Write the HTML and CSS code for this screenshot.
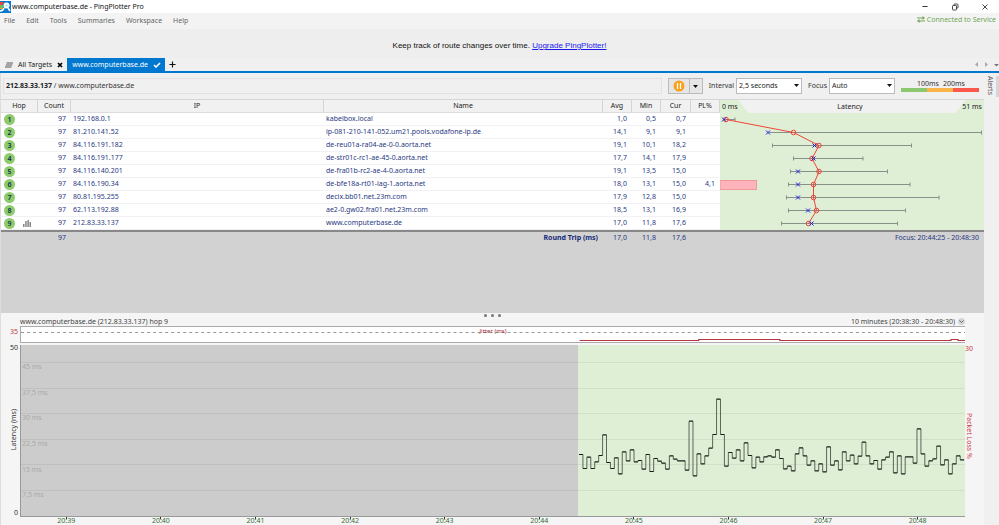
FILE: index.html
```html
<!DOCTYPE html>
<html lang="en">
<head>
<meta charset="utf-8">
<title>www.computerbase.de - PingPlotter Pro</title>
<link rel="stylesheet" href="styles.css">
</head>
<body>
<div class="app">
  <header class="titlebar">
    <svg class="logo" viewBox="0 0 11 12" aria-hidden="true">
      <rect width="11" height="12" fill="#0a78d0"/>
      <path d="M0 1h4L2.500 4H0z" fill="#e8473f"/>
      <path d="M0 4h2.500L3.500 7H0z" fill="#6cc24a"/>
      <path d="M0 10q3 0 4-3" stroke="#fff" stroke-width="1.500" fill="none"/>
      <path d="M0 7.500h2.500" stroke="#f7a61b" stroke-width="1.200"/>
      <circle cx="6.500" cy="4.500" r="3" fill="#fff"/>
      <circle cx="6.500" cy="4.500" r="1.200" fill="#bfe0f6"/>
      <path d="M8 7l2 3" stroke="#fff" stroke-width="1.500"/>
    </svg>
    <h1>www.computerbase.de - PingPlotter Pro</h1>
    <div class="window-buttons">
      <button aria-label="Minimize"><svg viewBox="0 0 8 8"><path d="M1.500 3.500h5" stroke="#333" fill="none"/></svg></button>
      <button aria-label="Restore"><svg viewBox="0 0 8 8"><path d="M3 2.500V1.500q0-.5.5-.5H6q1 0 1 1v2.500q0 .5-.5.5h-1" stroke="#333" stroke-width=".9" fill="none"/><rect x="1.500" y="2.500" width="4" height="4.500" rx=".7" stroke="#333" stroke-width=".9" fill="#fff"/></svg></button>
      <button aria-label="Close"><svg viewBox="0 0 8 8"><path d="M1.500 1.500l5 5m0-5l-5 5" stroke="#333" stroke-width=".9" fill="none"/></svg></button>
    </div>
  </header>

  <nav class="menubar">
    <button>File</button><button>Edit</button><button>Tools</button><button>Summaries</button><button>Workspace</button><button>Help</button>
    <span class="service"><svg viewBox="0 0 8 7" aria-hidden="true"><path d="M0 2h7M1 5h7" stroke="#6fa757" stroke-width="1.100" fill="none"/><path d="M5.500 0l2.500 2-2.500 2zM2.500 3L0 5l2.500 2z" fill="#6fa757"/></svg>Connected to Service</span>
  </nav>

  <p class="banner">Keep track of route changes over time. <a href="#upgrade">Upgrade PingPlotter!</a></p>

  <div class="tabs">
    <button class="tab"><svg viewBox="0 0 8 6" aria-hidden="true"><path d="M1.500 1H8M.8 3h6.500M0 5h6.500" stroke="#8b8b8b" stroke-width="1.400"/></svg>All Targets<svg class="tab-close" viewBox="0 0 6 6" aria-hidden="true"><path d="M1 1l4 4m0-4L1 5" stroke="#000" stroke-width="1.700"/></svg></button>
    <button class="tab active">www.computerbase.de<svg viewBox="0 0 8 6" aria-hidden="true"><path d="M1 3l2 2 4-4" stroke="#fff" stroke-width="1.600" fill="none"/></svg></button>
    <button class="tab-add" aria-label="New tab"><svg viewBox="0 0 8 8"><path d="M4 .5v7M.5 4h7" stroke="#111" stroke-width="1.300"/></svg></button>
    <div class="tab-nav">
      <button aria-label="Scroll tabs left"><svg viewBox="0 0 5 5"><path d="M4 0v5L1 2.500z" fill="#aaa"/></svg></button>
      <button aria-label="Scroll tabs right"><svg viewBox="0 0 5 5"><path d="M1 0v5l3-2.500z" fill="#aaa"/></svg></button>
      <button aria-label="Tab list"><svg viewBox="0 0 5 5"><path d="M0 2h5L2.500 4.500z" fill="#777"/></svg></button>
    </div>
  </div>

  <div class="workspace">
    <main class="target">
      <div class="toolbar">
        <div class="address"><b>212.83.33.137</b> / www.computerbase.de</div>
        <div class="pause-group">
          <button aria-label="Pause"><svg class="pause" viewBox="0 0 12 12"><circle cx="6" cy="6" r="5.500" fill="#f9a11b"/><path d="M4.500 3v6M7.500 3v6" stroke="#fff" stroke-width="1.300"/></svg></button>
          <button aria-label="Pause options"><svg class="caret" viewBox="0 0 5 3"><path d="M0 0h5L2.500 3z"/></svg></button>
        </div>
        <label class="field">Interval<span class="select"><select><option>2,5 seconds</option></select><svg class="caret" viewBox="0 0 5 3"><path d="M0 0h5L2.500 3z"/></svg></span></label>
        <label class="field">Focus<span class="select"><select><option>Auto</option></select><svg class="caret" viewBox="0 0 5 3"><path d="M0 0h5L2.500 3z"/></svg></span></label>
        <div class="legend">
          <span class="good"></span><span class="warn">100ms</span><span class="bad">200ms</span>
        </div>
      </div>

      <section class="trace">
        <table>
          <colgroup><col class="c-hop"><col class="c-count"><col class="c-ip"><col><col class="c-num"><col class="c-num"><col class="c-cur"><col class="c-num"><col class="c-latency"></colgroup>
          <thead>
            <tr><th>Hop</th><th>Count</th><th>IP</th><th>Name</th><th>Avg</th><th>Min</th><th>Cur</th><th>PL%</th>
              <th class="latency-head"><div><span>0 ms</span><b>Latency</b><span>51 ms</span></div></th></tr>
          </thead>
          <tbody>
            <tr><td><i>1</i></td><td>97</td><td>192.168.0.1</td><td>kabelbox.local</td><td>1,0</td><td>0,5</td><td>0,7</td><td></td>
              <td class="latency" rowspan="9">
                <svg viewBox="0 0 264 117" preserveAspectRatio="none" role="img" aria-label="Latency per hop">
                  <rect x="0" y="67.500" width="36.500" height="9" fill="#ffb3bc" stroke="#ee9a94"/>
                  <path class="range" d="M4 6.500H15m0-2v4M49 19.500H261.500m0-2v4M52.500 32.500H191.500M52.500 30.500v4m139-4v4M73.500 45.500H143M73.500 43.500v4m69.500-4v4M70.500 58.500H167.500M70.500 56.500v4m97-4v4M68.500 71.500H190M68.500 69.500v4m121.500-4v4M66.500 84.500H219M66.500 82.500v4m152.500-4v4M68.500 97.500H185.500M68.500 95.500v4m117-4v4M61.500 110.500H177.500M61.500 108.500v4m116-4v4"/>
                  <polyline class="avg" points="6,6.500 73.500,19.500 99,32.500 92,45.500 99,58.500 93.500,71.500 93.500,84.500 96.500,97.500 88.500,110.500"/>
                  <g class="avg"><circle cx="6" cy="6.500" r="2.300"/><circle cx="73.500" cy="19.500" r="2.300"/><circle cx="99" cy="32.500" r="2.300"/><circle cx="92" cy="45.500" r="2.300"/><circle cx="99" cy="58.500" r="2.300"/><circle cx="93.500" cy="71.500" r="2.300"/><circle cx="93.500" cy="84.500" r="2.300"/><circle cx="96.500" cy="97.500" r="2.300"/><circle cx="88.500" cy="110.500" r="2.300"/></g>
                  <path class="current" d="M2 4.500l4 4m0-4l-4 4M46 17.500l4 4m0-4l-4 4M92.500 30.500l4 4m0-4l-4 4M91.500 43.500l4 4m0-4l-4 4M76 56.500l4 4m0-4l-4 4M76 69.500l4 4m0-4l-4 4M76 82.500l4 4m0-4l-4 4M86 95.500l4 4m0-4l-4 4M89.500 108.500l4 4m0-4l-4 4"/>
                </svg>
              </td></tr>
            <tr><td><i>2</i></td><td>97</td><td>81.210.141.52</td><td>ip-081-210-141-052.um21.pools.vodafone-ip.de</td><td>14,1</td><td>9,1</td><td>9,1</td><td></td></tr>
            <tr><td><i>3</i></td><td>97</td><td>84.116.191.182</td><td>de-reu01a-ra04-ae-0-0.aorta.net</td><td>19,1</td><td>10,1</td><td>18,2</td><td></td></tr>
            <tr><td><i>4</i></td><td>97</td><td>84.116.191.177</td><td>de-str01c-rc1-ae-45-0.aorta.net</td><td>17,7</td><td>14,1</td><td>17,9</td><td></td></tr>
            <tr><td><i>5</i></td><td>97</td><td>84.116.140.201</td><td>de-fra01b-rc2-ae-4-0.aorta.net</td><td>19,1</td><td>13,5</td><td>15,0</td><td></td></tr>
            <tr><td><i>6</i></td><td>97</td><td>84.116.190.34</td><td>de-bfe18a-rt01-lag-1.aorta.net</td><td>18,0</td><td>13,1</td><td>15,0</td><td>4,1</td></tr>
            <tr><td><i>7</i></td><td>97</td><td>80.81.195.255</td><td>decix.bb01.net.23m.com</td><td>17,9</td><td>12,8</td><td>15,0</td><td></td></tr>
            <tr><td><i>8</i></td><td>97</td><td>62.113.192.88</td><td>ae2-0.gw02.fra01.net.23m.com</td><td>18,5</td><td>13,1</td><td>16,9</td><td></td></tr>
            <tr><td><div class="hop"><i>9</i><svg viewBox="0 0 8 7" aria-hidden="true"><path d="M0 7V4h1.500v3zM2.200 7V1h1.500v6zM4.400 7V0h1.500v7zM6.500 7V2H8v5z" fill="#888"/></svg></div></td><td>97</td><td>212.83.33.137</td><td>www.computerbase.de</td><td>17,0</td><td>11,8</td><td>17,6</td><td></td></tr>
          </tbody>
          <tfoot>
            <tr><td></td><td>97</td><td></td><td>Round Trip (ms)</td><td>17,0</td><td>11,8</td><td>17,6</td><td></td><td>Focus: 20:44:25 - 20:48:30</td></tr>
          </tfoot>
        </table>
      </section>

      <section class="timeline">
        <div class="splitter"><span></span><span></span><span></span></div>
        <div class="timeline-title"><span>www.computerbase.de (212.83.33.137) hop 9</span>
          <button>10 minutes (20:38:30 - 20:48:30)<svg viewBox="0 0 7 7" aria-hidden="true"><circle cx="3.500" cy="3.500" r="3.500" fill="#d5d5d5"/><path d="M1.500 2.500l2 2 2-2" stroke="#666" fill="none"/></svg></button></div>
        <div class="charts">
          <div class="jitter-max">35</div>
          <div class="jitter">
            <svg viewBox="0 0 943 14" preserveAspectRatio="none" aria-hidden="true">
              <path d="M0 5.500H943" stroke="#999" stroke-dasharray="3 3"/>
              <path d="M558 13.500H677V12.500H758V13.500H929V12.500H936V13.500H943" stroke="#b23a3e" stroke-width="1.200" fill="none"/>
            </svg>
            <span>Jitter (ms)</span>
          </div>
          <div class="y-axis"><span>50</span><span class="vertical">Latency (ms)</span><span>0</span></div>
          <div class="plot">
            <svg id="plot" viewBox="0 0 944 171" preserveAspectRatio="none" role="img" aria-label="Latency over time">
              <rect x="557" width="387" height="171" fill="#deefd6"/>
              <path d="M0 17.500H944M0 43.500H944M0 68.500H944M0 94.500H944M0 119.500H944M0 145.500H944" stroke="#000" stroke-opacity=".06"/>
              <path id="risers" fill="none" stroke="#5d6659"/>
              <path id="levels" fill="none" stroke="#161c14" stroke-width="1.200"/>
            </svg>
            <div class="scale"><span>45 ms</span><span>37,5 ms</span><span>30 ms</span><span>22,5 ms</span><span>15 ms</span><span>7,5 ms</span></div>
          </div>
          <div class="loss-axis"><span>30</span><span class="vertical">Packet Loss %</span></div>
          <div class="times"><span>20:39</span><span>20:40</span><span>20:41</span><span>20:42</span><span>20:43</span><span>20:44</span><span>20:45</span><span>20:46</span><span>20:47</span><span>20:48</span></div>
        </div>
      </section>
    </main>
    <aside class="alerts"><button>Alerts</button></aside>
  </div>
</div>
<script src="script.js"></script>
</body>
</html>
```
FILE: styles.css
```css
* { box-sizing: border-box; }
body {
  margin: 0;
  background: #f0f0f0;
  color: #333;
  font: 7px/10px "Noto Sans", "Open Sans", sans-serif;
}
button, select { font: inherit; color: inherit; background: none; border: 0; padding: 0; margin: 0; }
svg { display: block; flex: none; }
.app { display: flex; flex-direction: column; min-height: 100vh; }

.titlebar { display: flex; align-items: center; height: 13px; background: #fff; gap: 1px; }
.logo { width: 11px; height: 12px; }
h1 { margin: 0; font-size: 7px; font-weight: 400; color: #111; flex: 1; }
.window-buttons { display: flex; gap: 22px; padding-right: 10px; }
.window-buttons svg { width: 8px; height: 8px; }

.menubar { display: flex; align-items: center; gap: 11px; height: 16px; padding: 0 3px 0 4px; background: #f3f3f3; color: #666; }
.service { display: flex; align-items: center; gap: 2px; margin: 0 0 3px auto; color: #6fa757; }
.service svg { width: 8px; height: 7px; }

.banner { margin: 0; height: 29px; padding-top: 12px; text-align: center; color: #111; background: #eee; font: 8px/10px "Liberation Sans", Arial, sans-serif; }
.banner a { color: #1a1af0; }

.tabs { display: flex; align-items: stretch; height: 15px; border-bottom: 2px solid #0078d0; color: #222; background: #f0f0f0; }
.tab { display: flex; align-items: center; gap: 5px; padding: 1px 4px 0 5px; }
.tab svg { width: 8px; height: 6px; }
.tab .tab-close { width: 6px; }
.tab.active { background: #0078d0; color: #fff; }
.tab-add { padding: 0 4px; }
.tab-add svg { width: 7px; height: 7px; }
.tab-nav { display: flex; gap: 5px; margin-left: auto; }
.tab-nav svg { width: 5px; height: 5px; }

.workspace { display: flex; flex: 1; }
.target { flex: 1; display: flex; flex-direction: column; border-left: 1px solid #ddd; }
.alerts { width: 15px; padding-top: 3px; }
.alerts button { display: flex; align-items: center; width: 15px; height: 21px; writing-mode: vertical-rl; border-right: 3px solid #d6d6d6; color: #555; }

.toolbar { display: flex; align-items: center; height: 26px; padding: 0 5px 0 2px; gap: 6px; }
.address { flex: 1; padding: 2px; border: 1px solid #e2e2e2; }
.address b { color: #222; }
.pause-group { display: flex; height: 16px; border: 1px solid #bbb; background: #e6e6e6; }
.pause-group button { display: flex; align-items: center; justify-content: center; width: 20px; }
.pause-group button + button { width: 13px; border-left: 1px solid #bbb; }
.pause { width: 12px; height: 12px; }
.caret { width: 5px; height: 3px; fill: #111; }
.field { display: flex; align-items: center; gap: 2px; }
.select { position: relative; }
.select select { appearance: none; display: block; width: 66px; height: 16px; padding: 0 12px 0 2px; border: 1px solid #bbb; background: #fff; color: #222; }
.select .caret { position: absolute; right: 3px; top: 6px; pointer-events: none; }
.legend { display: flex; width: 78px; }
.legend span { flex: 1; height: 12px; border-bottom: 4px solid #8cc870; line-height: 7px; }
.legend .warn, .legend .bad { border-color: #fbb44a; text-indent: -10px; white-space: nowrap; }
.legend .bad { border-color: #f9584b; }

.trace { height: 214px; background: #d2d2d2; border-top: 1px solid #d5d5d5; }
table { width: 100%; table-layout: fixed; border-collapse: separate; border-spacing: 0; }
.c-hop { width: 37px; }
.c-count { width: 33px; }
.c-ip { width: 253px; }
.c-num { width: 29px; }
.c-cur { width: 30px; }
.c-latency { width: 264px; }
th, td { padding: 0; white-space: nowrap; }
th { height: 13px; background: #f1f1f1; font-weight: 400; color: #222; border-right: 1px solid #d5d5d5; border-bottom: 1px solid #ddd; }
td { height: 13px; text-align: right; padding-right: 5px; color: #27387f; }
tbody td { background: #fff; border-bottom: 1px solid #f2f2f5; line-height: 10px; }
td:nth-child(1) { text-align: left; padding-left: 3px; }
tbody td:nth-child(3), tbody td:nth-child(4) { text-align: left; padding-left: 2px; }
i { display: block; width: 11px; height: 11px; border-radius: 50%; background: #8ecb6c; color: #12304f; text-align: center; font-style: normal; font-weight: 600; line-height: 11px; }
.hop { display: flex; align-items: center; gap: 8px; }
.hop svg { width: 8px; height: 7px; }
.latency-head { border: 0; }
.latency-head div { display: flex; justify-content: space-between; align-items: center; height: 13px; padding: 0 2px; background: linear-gradient(52deg, #deefd6 22px, transparent 23px), linear-gradient(-52deg, #deefd6 22px, #f1f1f1 23px); }
.latency-head div { background: linear-gradient(52deg, #deefd6 22px, transparent 23px), linear-gradient(-52deg, #deefd6 22px, transparent 23px), #f1f1f1; }
.latency-head b { font-weight: 400; }
tbody td.latency { padding: 0; height: 117px; background: #deefd6; border: 0; vertical-align: top; }
.latency svg { width: 100%; height: 117px; }
.range { fill: none; stroke: #87918a; }
.avg { fill: none; stroke: #f04438; }
.current { fill: none; stroke: #2020dd; }
tfoot td { border-top: 2px solid #888; line-height: 10px; }
tfoot td:nth-child(4) { font-weight: 700; color: #142a78; }

.timeline { flex: 1; display: flex; flex-direction: column; background: #f5f5f5; }
.splitter { display: flex; justify-content: center; gap: 4px; height: 4px; padding-top: 1px; }
.splitter span { width: 3px; height: 3px; border-radius: 50%; background: #777; }
.timeline-title { display: flex; justify-content: space-between; height: 9px; padding: 0 19px; line-height: 9px; color: #444; }
.timeline-title button { display: flex; align-items: center; gap: 3px; }
.timeline-title svg { width: 7px; height: 7px; }
.charts { flex: 1; display: grid; grid-template-columns: 19px 1fr 19px; grid-template-rows: 17px 1fr 8px; }
.jitter-max { padding: 1px 2px 0 0; text-align: right; color: #b93a42; }
.jitter { grid-column: 2 / 3; position: relative; height: 17px; border: solid #aaa; border-width: 1px 0 1px 1px; background: #fff; }
.jitter svg { width: 100%; height: 14px; }
.jitter span { position: absolute; inset: 0; text-align: center; line-height: 8px; font-size: 6px; color: #98282e; }
.y-axis { grid-row: 2; display: flex; flex-direction: column; justify-content: space-between; align-items: flex-end; padding-right: 2px; line-height: 9px; }
.y-axis .vertical { transform: rotate(180deg); }
.vertical { writing-mode: vertical-rl; }
.plot { grid-row: 2; grid-column: 2; position: relative; margin-top: 2px; border: solid #999; border-width: 0 0 1px 1px; background: #ccc; }
.plot svg { position: absolute; width: 100%; height: 100%; }
.scale { position: absolute; inset: 10% auto 0 1px; display: flex; flex-direction: column; color: #aaa; line-height: 9px; }
.scale span { flex: 1; }
.loss-axis { grid-row: 2; grid-column: 3; color: #cc3b46; display: flex; flex-direction: column; align-items: flex-start; gap: 60px; padding-top: 1px; line-height: 9px; }
.times { grid-row: 3; grid-column: 2; display: flex; margin-left: -1px; color: #356a35; line-height: 8px; }
.times span { flex: 1; text-align: center; background: linear-gradient(#333, #333) center top / 1px 2px no-repeat; }
```
FILE: script.js
```js
// Distance of each 2.5 s sample below the top reference level, in thirds of a unit.
const samples = [
  222, 264, 230, 264, 244, 225, 163, 246, 264, 232, 280, 214, 241, 208, 244, 240,
  266, 222, 273, 234, 242, 248, 266, 226, 236, 241, 241, 269, 122, 286, 220, 250,
  226, 203, 162, 56, 162, 257, 216, 233, 208, 241, 187, 225, 262, 230, 244, 229,
  226, 230, 208, 234, 265, 257, 271, 220, 202, 226, 254, 241, 271, 250, 274, 199,
  254, 241, 268, 214, 241, 224, 250, 227, 185, 226, 250, 240, 266, 238, 230, 214,
  277, 226, 280, 229, 229, 248, 145, 220, 257, 241, 235, 197, 253, 238, 280, 250,
  226, 238
];
const start = 558;
const step = 3.93;
const level = (v) => 35.5 + v / 3;
let levels = "";
let risers = "";
samples.forEach((v, i) => {
  const x = start + i * step;
  const end = Math.min(x + step, 944);
  levels += `M${x} ${level(v)}H${end}`;
  if (i > 0) risers += `M${x} ${level(samples[i - 1])}V${level(v)}`;
});
document.getElementById("levels").setAttribute("d", levels);
document.getElementById("risers").setAttribute("d", risers);
```
